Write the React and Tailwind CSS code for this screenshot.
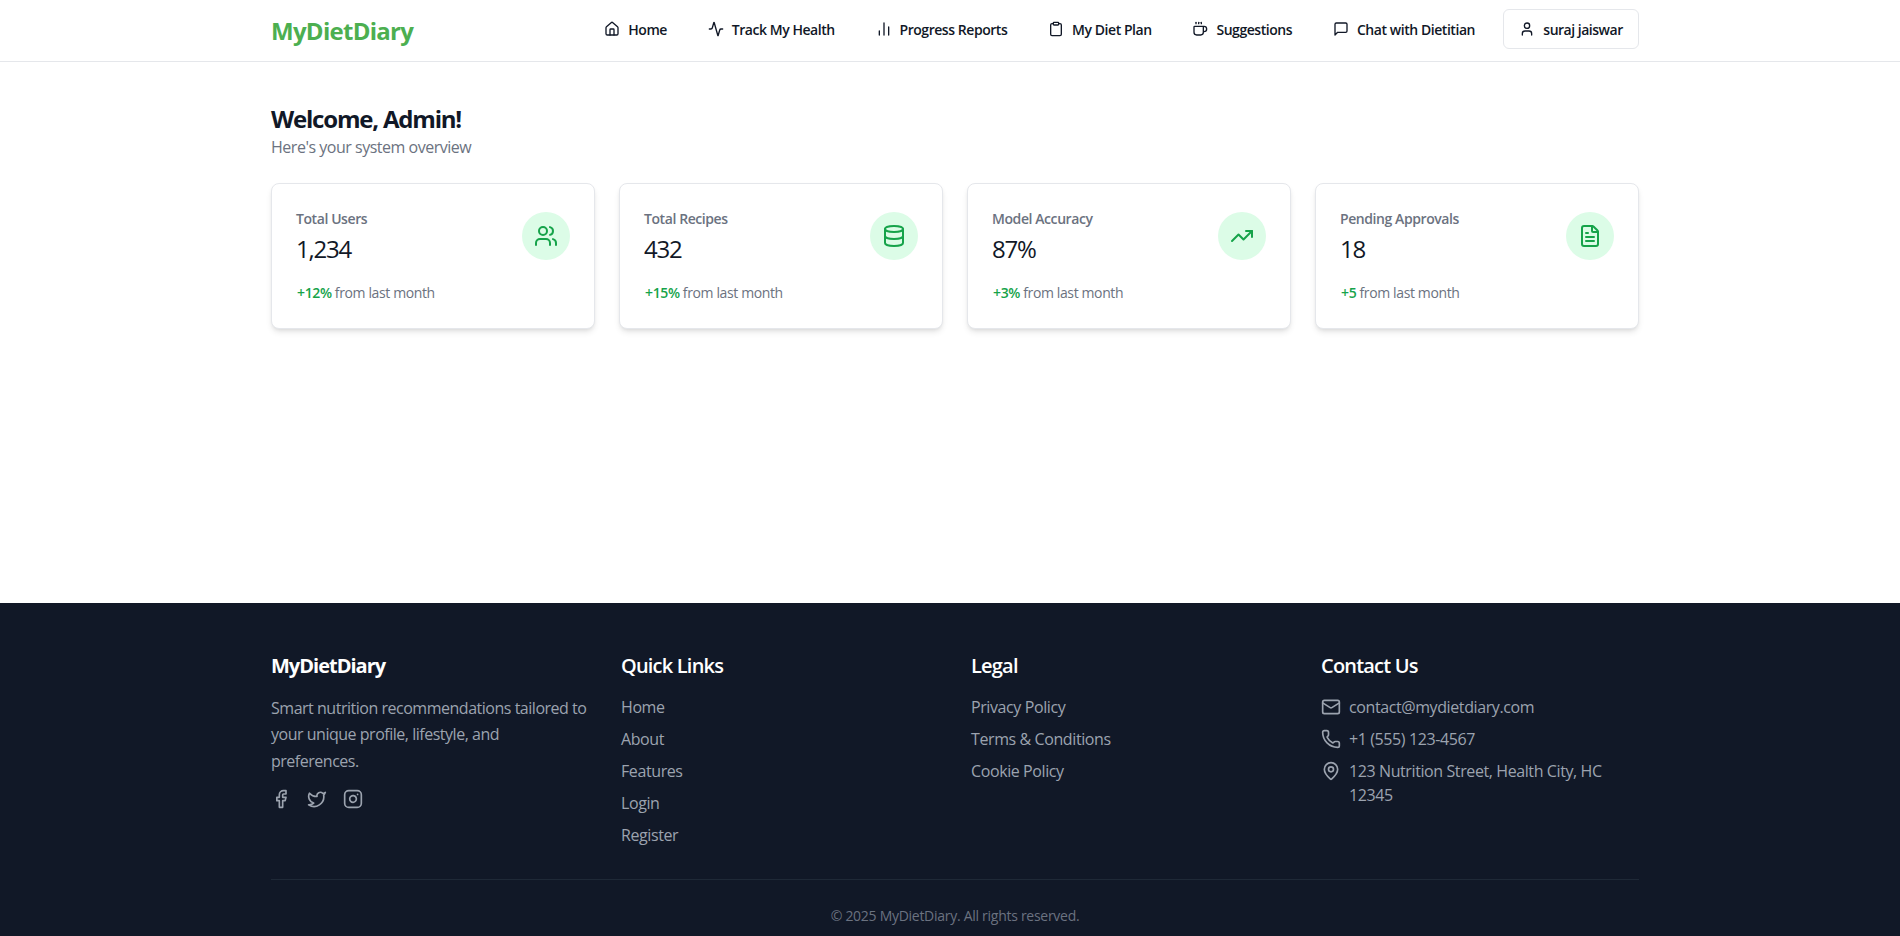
import { Home, Activity, BarChart2, Clipboard, Coffee, User, Users, Database, TrendingUp, FileText, Facebook, Twitter, Instagram, Mail, Phone, MapPin } from 'lucide-react';

const ChatIcon = ({ size = 16 }) => (
  <svg width={size} height={size} viewBox="0 0 24 24" fill="none" stroke="currentColor" strokeWidth="2" strokeLinecap="round" strokeLinejoin="round">
    <path d="M21 15a2 2 0 0 1-2 2H7l-4 4V5a2 2 0 0 1 2-2h14a2 2 0 0 1 2 2z" />
  </svg>
);

const navLinks = [
  { label: 'Home', icon: Home },
  { label: 'Track My Health', icon: Activity },
  { label: 'Progress Reports', icon: BarChart2 },
  { label: 'My Diet Plan', icon: Clipboard },
  { label: 'Suggestions', icon: Coffee },
  { label: 'Chat with Dietitian', icon: ChatIcon },
];

const stats = [
  { title: 'Total Users', value: '1,234', delta: '+12%', icon: Users },
  { title: 'Total Recipes', value: '432', delta: '+15%', icon: Database },
  { title: 'Model Accuracy', value: '87%', delta: '+3%', icon: TrendingUp },
  { title: 'Pending Approvals', value: '18', delta: '+5', icon: FileText },
];

const quickLinks = ['Home', 'About', 'Features', 'Login', 'Register'];
const legalLinks = ['Privacy Policy', 'Terms & Conditions', 'Cookie Policy'];

const App = () => {
  return (
    <div className="min-h-[936px] flex flex-col bg-white font-['Open_Sans',sans-serif] tracking-[-0.03em]">
      <header className="h-[62px] border-b border-[#e5e7eb] bg-white">
        <div className="w-[1368px] ml-[271px] h-[58px] flex items-center justify-between">
          <span className="mt-[3px] text-[24px] font-bold tracking-[-0.03em] text-[#4caf50]">MyDietDiary</span>
          <nav className="flex items-center">
            <div className="flex items-center gap-[16.75px] mr-[16px]">
              {navLinks.map(link => (
                <a key={link.label} className="flex items-center gap-2 px-[12px] py-2 text-[14px] font-semibold tracking-[-0.032em] text-[#111827]">
                  <link.icon size={16} />
                  <span>{link.label}</span>
                </a>
              ))}
            </div>
            <button className="h-[40px] w-[136px] flex items-center justify-center gap-2 rounded-md border border-[#e5e7eb] text-[14px] font-semibold tracking-[-0.035em] text-[#111827]">
              <User size={16} />
              <span>suraj jaiswar</span>
            </button>
          </nav>
        </div>
      </header>

      <main className="h-[541px] w-[1368px] ml-[271px] pt-[41px]">
        <h1 className="text-[24px] leading-8 font-bold tracking-[-0.05em] text-[#111827]">Welcome, Admin!</h1>
        <p className="text-[16px] leading-6 text-[#6b7280]">Here's your system overview</p>
        <div className="mt-[24px] grid grid-cols-4 gap-[24px]">
          {stats.map(card => (
            <div key={card.title} className="h-[146px] rounded-lg border border-[#e5e7eb] bg-white pt-[25px] px-[24px] shadow-md">
              <div className="flex items-center justify-between">
                <div>
                  <p className="text-[14px] leading-5 font-semibold tracking-[-0.03em] text-[#6b7280]">{card.title}</p>
                  <p className="mt-1 text-[24px] leading-8 font-medium tracking-[-0.05em] text-[#111827]">{card.value}</p>
                </div>
                <div className="mb-[2px] w-12 h-12 rounded-full bg-[#dcfce7] flex items-center justify-center text-[#16a34a]">
                  <card.icon size={24} />
                </div>
              </div>
              <p className="mt-[18px] pl-px text-[14px] leading-5 tracking-[-0.027em] text-[#6b7280]">
                <span className="font-semibold text-[#16a34a]">{card.delta}</span> from last month
              </p>
            </div>
          ))}
        </div>
      </main>

      <footer className="flex-1 bg-[#111827] text-[#9ca3af]">
        <div className="w-[1368px] ml-[271px] pt-[49px]">
          <div className="grid grid-cols-4 gap-[32px]">
            <div>
              <h3 className="text-[20px] leading-7 font-bold tracking-[-0.05em] text-white">MyDietDiary</h3>
              <p className="mt-[15px] text-[16px] leading-[26.4px]">Smart nutrition recommendations tailored to your unique profile, lifestyle, and preferences.</p>
              <div className="mt-[15px] flex gap-4 text-[#9ca3af]">
                <Facebook size={20} />
                <Twitter size={20} />
                <Instagram size={20} />
              </div>
            </div>
            <div>
              <h3 className="text-[20px] leading-7 font-semibold tracking-[-0.04em] text-white">Quick Links</h3>
              <ul className="mt-[15px] flex flex-col gap-[8px] tracking-[-0.025em]">
                {quickLinks.map(l => <li key={l} className="text-[16px] leading-6">{l}</li>)}
              </ul>
            </div>
            <div>
              <h3 className="text-[20px] leading-7 font-semibold tracking-[-0.04em] text-white">Legal</h3>
              <ul className="mt-[15px] flex flex-col gap-[8px] tracking-[-0.025em]">
                {legalLinks.map(l => <li key={l} className="text-[16px] leading-6">{l}</li>)}
              </ul>
            </div>
            <div>
              <h3 className="text-[20px] leading-7 font-semibold tracking-[-0.04em] text-white">Contact Us</h3>
              <ul className="mt-[15px] flex flex-col gap-[8px] text-[16px] leading-6 tracking-[-0.025em]">
                <li className="flex items-start gap-2"><Mail size={20} className="mt-[2px] shrink-0" />contact@mydietdiary.com</li>
                <li className="flex items-start gap-2"><Phone size={20} className="mt-[2px] shrink-0" />+1 (555) 123-4567</li>
                <li className="flex items-start gap-2"><MapPin size={20} className="mt-[2px] shrink-0" />123 Nutrition Street, Health City, HC 12345</li>
              </ul>
            </div>
          </div>
          <div className="mt-[32px] border-t border-[#1f2937] pt-[25px] text-center text-[14px] tracking-[-0.02em] text-[#6b7280]">
            © 2025 MyDietDiary. All rights reserved.
          </div>
        </div>
      </footer>
    </div>
  );
};

export default App;
